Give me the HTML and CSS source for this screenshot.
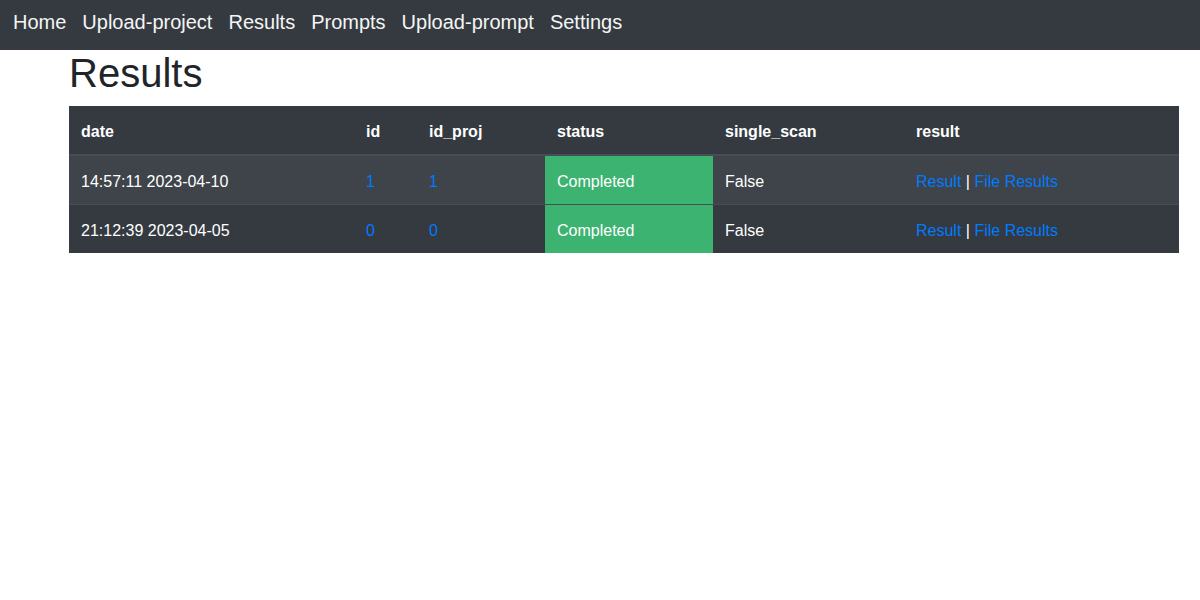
FILE: index.html
```html
<!DOCTYPE html>
<html lang="en">
<head>
<meta charset="utf-8">
<title>Results</title>
<link rel="stylesheet" href="styles.css">
</head>
<body>
<nav class="topnav">
  <a class="nav-link" href="#">Home</a>
  <a class="nav-link" href="#">Upload-project</a>
  <a class="nav-link" href="#">Results</a>
  <a class="nav-link" href="#">Prompts</a>
  <a class="nav-link" href="#">Upload-prompt</a>
  <a class="nav-link" href="#">Settings</a>
</nav>
<main class="content">
  <h1 class="page-title">Results</h1>
  <table class="results">
    <thead>
      <tr>
        <th class="c-date">date</th>
        <th class="c-id">id</th>
        <th class="c-proj">id_proj</th>
        <th class="c-status">status</th>
        <th class="c-single">single_scan</th>
        <th class="c-result">result</th>
      </tr>
    </thead>
    <tbody>
      <tr>
        <td>14:57:11 2023-04-10</td>
        <td><a href="#">1</a></td>
        <td><a href="#">1</a></td>
        <td class="ok">Completed</td>
        <td>False</td>
        <td><a href="#">Result</a> | <a href="#">File Results</a></td>
      </tr>
      <tr>
        <td>21:12:39 2023-04-05</td>
        <td><a href="#">0</a></td>
        <td><a href="#">0</a></td>
        <td class="ok">Completed</td>
        <td>False</td>
        <td><a href="#">Result</a> | <a href="#">File Results</a></td>
      </tr>
    </tbody>
  </table>
</main>
</body>
</html>
```

FILE: styles.css
```css
* { box-sizing: border-box; }

body {
  margin: 0;
  font-family: "Liberation Sans", Arial, sans-serif;
  font-size: 16px;
  line-height: 1.5;
  color: #212529;
  background: #fff;
}

.topnav {
  display: flex;
  gap: 16px;
  height: 50px;
  padding: 10px 13px 16px;
  background: #343a40;
}

.nav-link {
  color: #f5f5f5;
  text-decoration: none;
  font-size: 20px;
  line-height: 24px;
}

.content {
  padding: 0 21px 0 69px;
}

.page-title {
  margin: 3px 0 13px;
  font-size: 40px;
  line-height: 40px;
  font-weight: 500;
  color: #212529;
}

.results {
  width: 100%;
  border-collapse: collapse;
  table-layout: fixed;
  background: #343a40;
  color: #fff;
}

.results th,
.results td {
  padding: 14px 12px 10px;
  text-align: left;
  vertical-align: top;
  border-top: 1px solid #454d55;
}

.results thead th {
  font-weight: 700;
  border-top: 0;
  border-bottom: 2px solid #454d55;
  padding: 14px 12px 10px;
}

.results tbody tr:nth-child(odd) {
  background: rgba(255, 255, 255, 0.05);
}

.results a {
  color: #007bff;
  text-decoration: none;
}

.results td.ok {
  background: #3cb371;
  color: #fff;
}

.c-date { width: 285px; }
.c-id { width: 63px; }
.c-proj { width: 128px; }
.c-status { width: 168px; }
.c-single { width: 191px; }
.c-result { width: 275px; }
```
